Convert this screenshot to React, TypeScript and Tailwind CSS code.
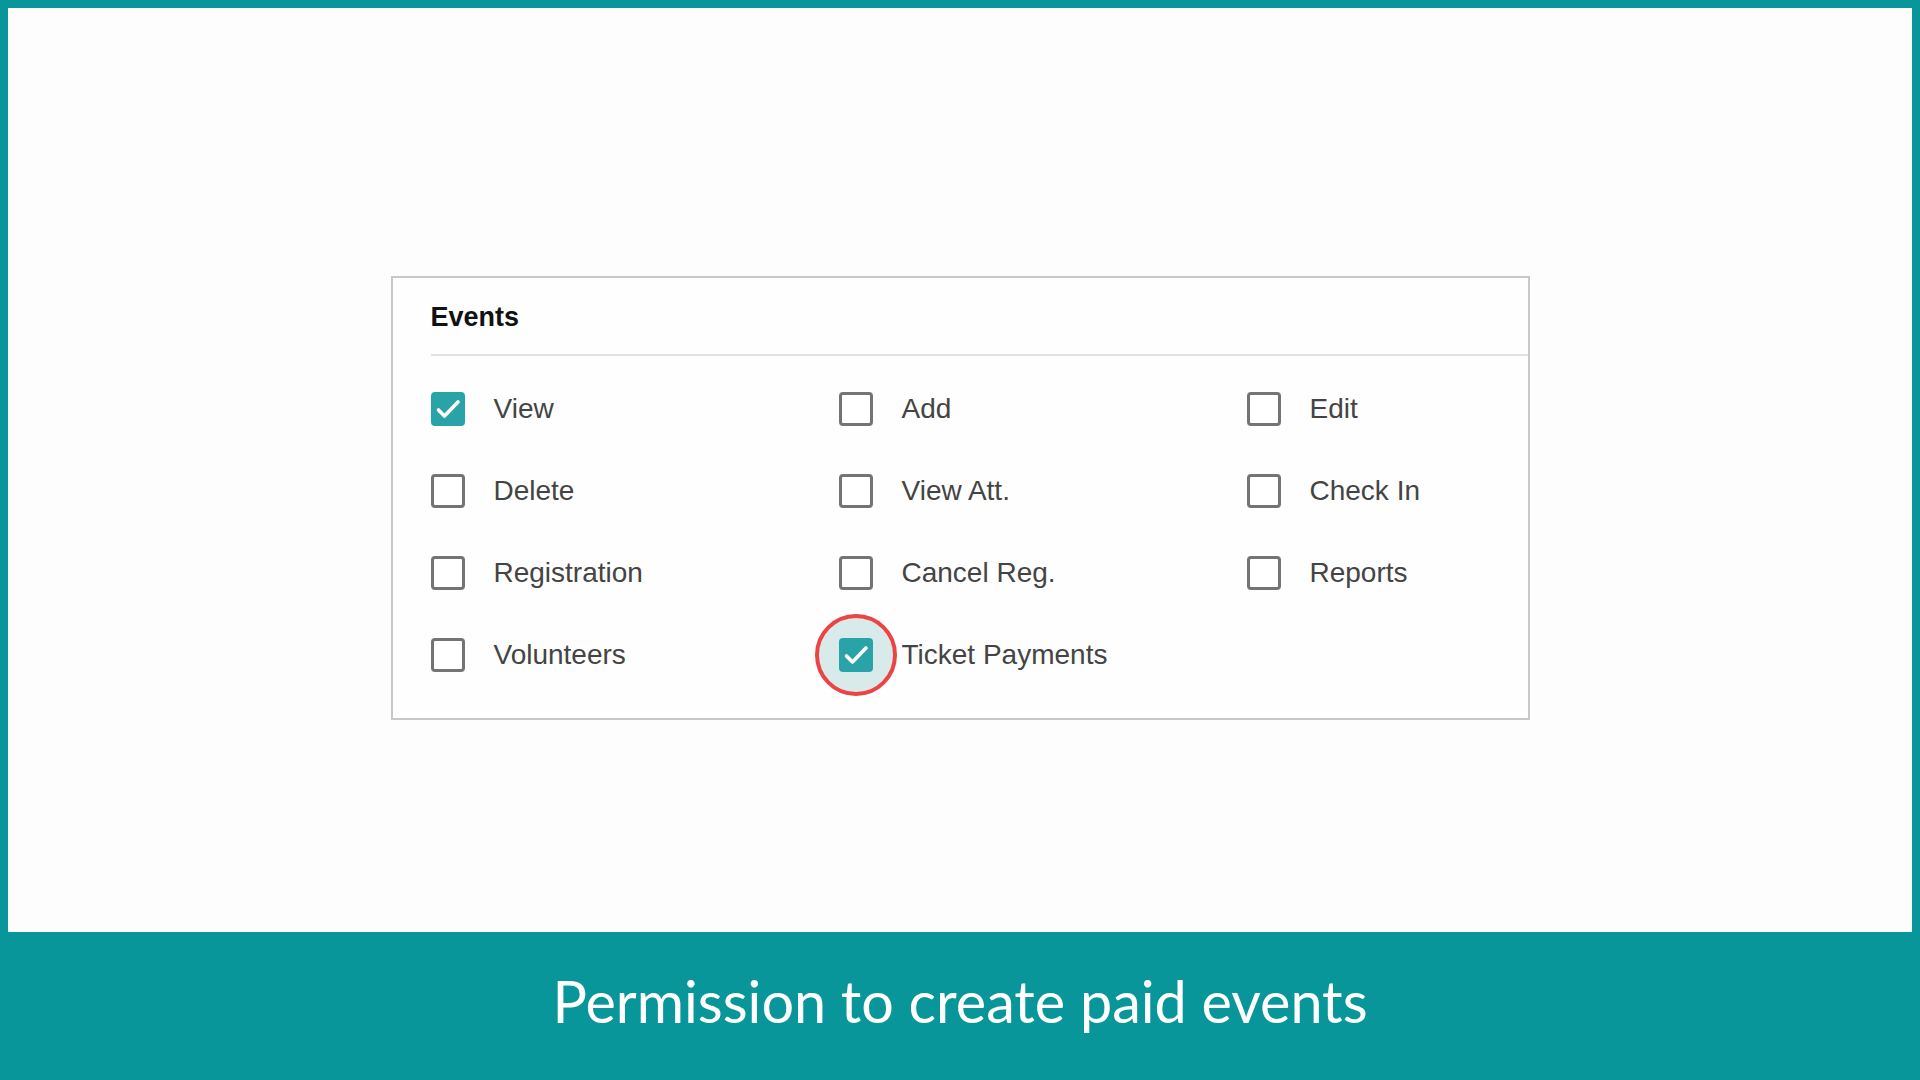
import React from 'react';

type Perm = { label: string; checked?: boolean; highlight?: boolean };

const perms: Perm[] = [
  { label: 'View', checked: true },
  { label: 'Add' },
  { label: 'Edit' },
  { label: 'Delete' },
  { label: 'View Att.' },
  { label: 'Check In' },
  { label: 'Registration' },
  { label: 'Cancel Reg.' },
  { label: 'Reports' },
  { label: 'Volunteers' },
  { label: 'Ticket Payments', checked: true, highlight: true },
];

function Checkbox({ checked }: { checked?: boolean }) {
  if (checked) {
    return (
      <div className="relative z-10 w-[34px] h-[34px] rounded-[4px] bg-[#2aa3a8] flex items-center justify-center shrink-0">
        <svg width="34" height="34" viewBox="0 0 34 34" fill="none">
          <path d="M7.5 18l6 6L27 10" stroke="white" strokeWidth="3.6" strokeLinecap="round" strokeLinejoin="round" />
        </svg>
      </div>
    );
  }
  return <div className="w-[34px] h-[34px] rounded-[4px] border-[3px] border-[#747474] bg-white shrink-0" />;
}

export default function App() {
  return (
    <div className="w-[1920px] h-[1080px] bg-[#08969a] flex flex-col">
      <div className="mx-[8px] mt-[8px] h-[924px] bg-[#fdfdfd] flex flex-col items-center pt-[268px]">
        <div
          className="w-[1139px] h-[444px] border-2 border-[#c8c8c8] bg-[#fefefe] flex flex-col"
          style={{ fontFamily: '"Liberation Sans", Arial, sans-serif' }}
        >
          <div className="h-[76px] pl-[38px] flex items-center pt-[3px]">
            <span className="text-[27px] font-bold text-[#111]">Events</span>
          </div>
          <div className="ml-[38px] h-[2px] bg-[#e2e2e2]" />
          <div className="grid grid-cols-[408px_408px_1fr] px-[38px] pt-[12px]">
            {perms.map((p) => (
              <div key={p.label} className="h-[82px] flex items-center gap-[29px]">
                <div className="relative w-[34px] h-[34px]">
                  {p.highlight && (
                    <div className="absolute left-[-24px] top-[-24px] w-[82px] h-[82px] rounded-full border-[4px] border-[#ec4444] bg-[#d9eaeb]" />
                  )}
                  <Checkbox checked={p.checked} />
                </div>
                <span className="text-[28px] text-[#444]">{p.label}</span>
              </div>
            ))}
          </div>
        </div>
      </div>
      <div className="flex-1 flex items-center justify-center pb-[10px]">
        <span className="text-white text-[57.5px]" style={{ fontFamily: 'Lato, sans-serif' }}>
          Permission to create paid events
        </span>
      </div>
    </div>
  );
}
